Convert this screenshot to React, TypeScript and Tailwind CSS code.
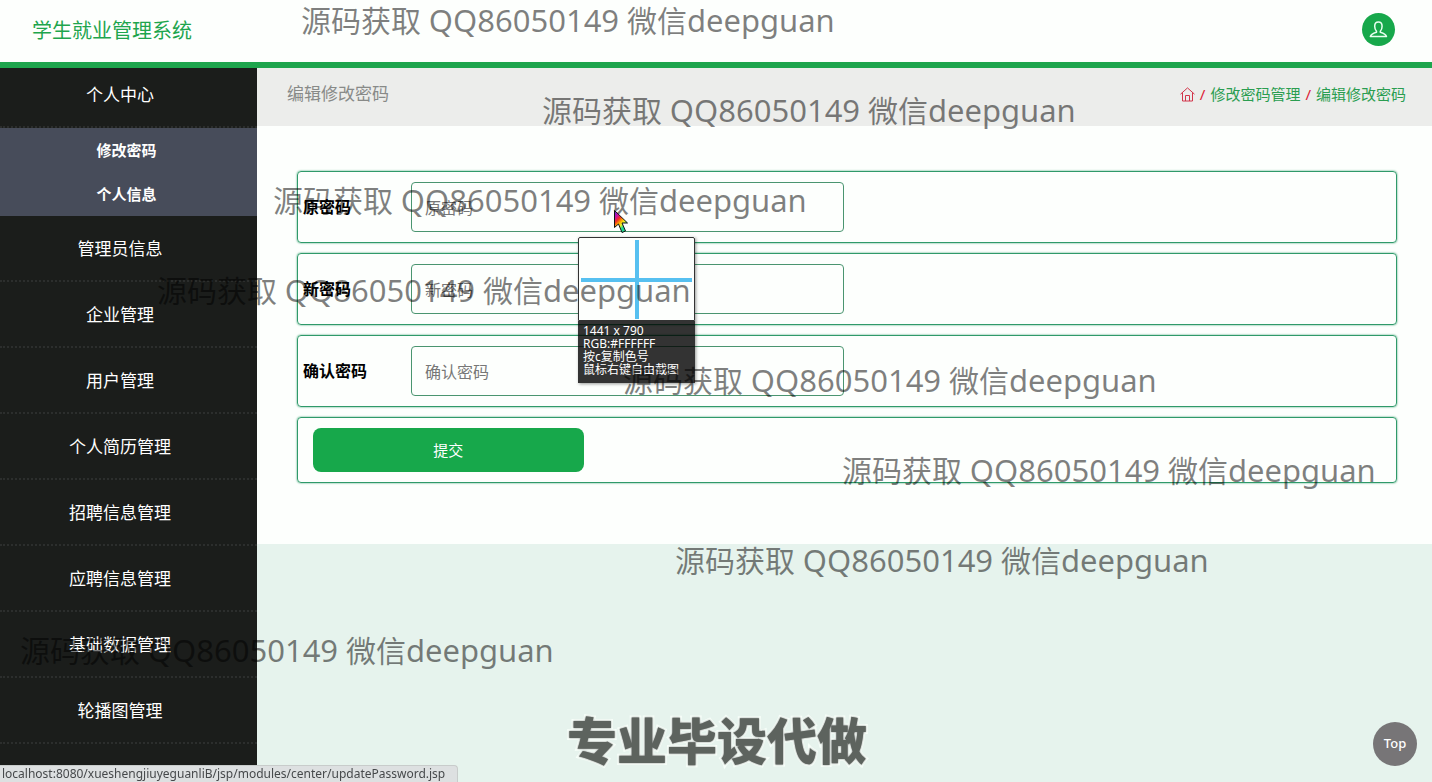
import React from 'react';

const menuItems = [
  '管理员信息',
  '企业管理',
  '用户管理',
  '个人简历管理',
  '招聘信息管理',
  '应聘信息管理',
  '基础数据管理',
  '轮播图管理',
];

const fields = [
  { id: 'oldPassword', label: '原密码' },
  { id: 'newPassword', label: '新密码' },
  { id: 'confirmPassword', label: '确认密码' },
];

const watermarks = [
  'left-[301px] top-[0px]',
  'left-[542px] top-[90px]',
  'left-[273px] top-[180px]',
  'left-[157px] top-[270px]',
  'left-[623px] top-[360px]',
  'left-[842px] top-[450px]',
  'left-[675px] top-[540px]',
  'left-[20px] top-[630px]',
];

const Header = () => {
  return (
    <header className="relative z-10 flex items-center justify-between h-[68px] pl-8 pr-[37px] bg-[#fdfffd] border-b-[6px] border-[#1ea54d]">
      <h1 className="text-xl text-[#1ea54d]">学生就业管理系统</h1>
      <button aria-label="个人中心" className="flex items-center justify-center w-[33px] h-[33px] mb-1 rounded-full bg-[#17a84b]">
        <svg width="19" height="19" viewBox="0 0 19 19" fill="none" stroke="#e8fff0" strokeWidth="1.5" strokeLinejoin="round">
          <path d="M7.500 11.200C6.300 10 5.700 8.200 5.700 6.200C5.700 3.600 7 2.100 9.400 2.100C11.800 2.100 13.100 3.600 13.100 6.200C13.100 8.200 12.500 10 11.300 11.200V12.200C14 13 17 13.900 17.500 16.600H1.300C1.800 13.900 4.800 13 7.500 12.200Z" />
        </svg>
      </button>
    </header>
  );
};

const Sidebar = () => {
  return (
    <nav className="w-[257px] shrink-0 -mt-[6px] bg-[#1b1d1b] text-center text-white">
      <a href="#" className="flex items-center justify-center h-[66px] pt-0.5 pr-[17px] text-[17px] border-b-2 border-dotted border-[#2c2e2d]">
        个人中心
      </a>
      <ul className="bg-[#474c5a] text-[15px] font-bold">
        <li><a href="#" className="flex items-center justify-center h-11 pr-1">修改密码</a></li>
        <li><a href="#" className="flex items-center justify-center h-11 pr-1">个人信息</a></li>
      </ul>
      <ul className="text-[17px]">
        {menuItems.map((item) => (
          <li key={item}>
            <a href="#" className="flex items-center justify-center h-[66px] pt-0.5 pr-[17px] border-b-2 border-dotted border-[#2c2e2d]">
              {item}
            </a>
          </li>
        ))}
      </ul>
    </nav>
  );
};

const Breadcrumb = () => {
  return (
    <div className="flex items-center justify-between h-[58px] pl-[30px] pr-[26px] pb-1.5 bg-[#ecedeb]">
      <h2 className="text-[17px] text-[#888a88]">编辑修改密码</h2>
      <div className="flex items-center gap-[5px] text-[15px] text-[#dc2036]">
        <a href="#" aria-label="首页">
          <svg width="15" height="15" viewBox="0 0 15 15" fill="none" stroke="#d2354a" strokeWidth="1">
            <path d="M0.500 7.200L7.500 0.900L14.500 7.200M2.500 5.600V14H12.500V5.600M5.500 14V8.500H9.500V14" />
          </svg>
        </a>
        <span>/</span>
        <a href="#" className="text-[#2a9d50]">修改密码管理</a>
        <span>/</span>
        <a href="#" className="text-[#2a9d50]">编辑修改密码</a>
      </div>
    </div>
  );
};

const PasswordForm = () => {
  return (
    <form className="flex flex-col gap-2.5 pt-[45px] pb-[61px] pl-10 pr-[35px] bg-[#fdfffd]">
      {fields.map((field) => (
        <div key={field.id} className="flex items-center h-[72px] pl-[5px] pr-2.5 border border-[#2f9a6a] rounded shadow-[0_0_2px_#2f9a6a]">
          <label htmlFor={field.id} className="w-[108px] shrink-0 font-bold text-black">
            {field.label}
          </label>
          <input
            id={field.id}
            type="password"
            placeholder={field.label}
            className="w-2/5 h-[50px] px-[13px] pt-0.5 border border-[#4a9570] rounded bg-transparent placeholder:text-[#777]"
          />
        </div>
      ))}
      <div className="flex items-center h-[66px] pl-[15px] border border-[#2f9a6a] rounded shadow-[0_0_2px_#2f9a6a]">
        <button type="button" className="w-1/4 h-11 rounded-lg bg-[#17a84b] text-[15px] text-white">
          提交
        </button>
      </div>
    </form>
  );
};

const ColorPicker = () => {
  return (
    <div className="absolute left-[578px] top-[237px] w-[117px] shadow-[1px_1px_3px_rgba(0,0,0,0.4)]">
      <svg className="block w-full h-[84px] bg-[#fdfffd] border border-[#333] rounded-t-xs" viewBox="0 0 115 82">
        <path d="M58 2V81M2 42H113" stroke="#56c0f0" strokeWidth="4" />
      </svg>
      <div className="h-[62px] px-[5px] pt-[3px] bg-black/80 text-xs leading-[13px] text-white whitespace-nowrap">
        <p>1441 x 790</p>
        <p>RGB:#FFFFFF</p>
        <p>按c复制色号</p>
        <p>鼠标右键自由截图</p>
      </div>
    </div>
  );
};

const Cursor = () => {
  return (
    <svg className="absolute left-[613px] top-[209px]" width="17" height="25" viewBox="0 0 17 25">
      <defs>
        <linearGradient id="rainbow" x1="0" y1="0" x2="0.600" y2="1">
          <stop offset="0.100" stopColor="#7a1fd0" />
          <stop offset="0.280" stopColor="#d0109a" />
          <stop offset="0.420" stopColor="#f03020" />
          <stop offset="0.580" stopColor="#ffb000" />
          <stop offset="0.700" stopColor="#f4f020" />
          <stop offset="0.850" stopColor="#20d890" />
        </linearGradient>
      </defs>
      <path d="M1.500 1.500V18.500L5.500 15L9 23.500L12.500 22L9 14H14.500Z" fill="url(#rainbow)" stroke="#111" strokeWidth="1" />
    </svg>
  );
};

const App = () => {
  return (
    <div className="relative flex flex-col min-h-screen overflow-hidden bg-[#e6f3ed] font-['Noto_Sans','Noto_Sans_CJK_SC',sans-serif]">
      <Header />
      <div className="flex flex-1">
        <Sidebar />
        <main className="flex-1 min-w-0">
          <Breadcrumb />
          <PasswordForm />
        </main>
      </div>

      <ColorPicker />

      <div className="absolute inset-0 z-20 overflow-hidden pointer-events-none">
        {watermarks.map((position) => (
          <p key={position} className={`absolute ${position} text-[30px] leading-10 text-black/50 whitespace-nowrap`}>
            源码获取 <span className="text-[31px]">QQ86050149</span> 微信<span className="text-[31px]">deepguan</span>
          </p>
        ))}
        <p className="absolute left-[567px] bottom-[11px] text-[50px] leading-[60px] font-extrabold text-[#5d635e] whitespace-nowrap [-webkit-text-stroke:4px_#f8fffa] [paint-order:stroke_fill] [text-shadow:0_0_2px_#777]">
          专业毕设代做
        </p>
        <Cursor />
      </div>

      <button className="fixed right-[15px] bottom-4 z-30 w-11 h-11 rounded-full bg-[#777577] text-[13px] font-medium text-white">
        Top
      </button>
      <div className="fixed left-0 bottom-0 z-30 pl-0.5 pr-3 border-t border-r border-[#c8cccb] rounded-tr-sm bg-[#dde0e1] text-xs leading-4 text-[#46494b] whitespace-nowrap">
        localhost:8080/xueshengjiuyeguanliB/jsp/modules/center/updatePassword.jsp
      </div>
    </div>
  );
};

export default App;
